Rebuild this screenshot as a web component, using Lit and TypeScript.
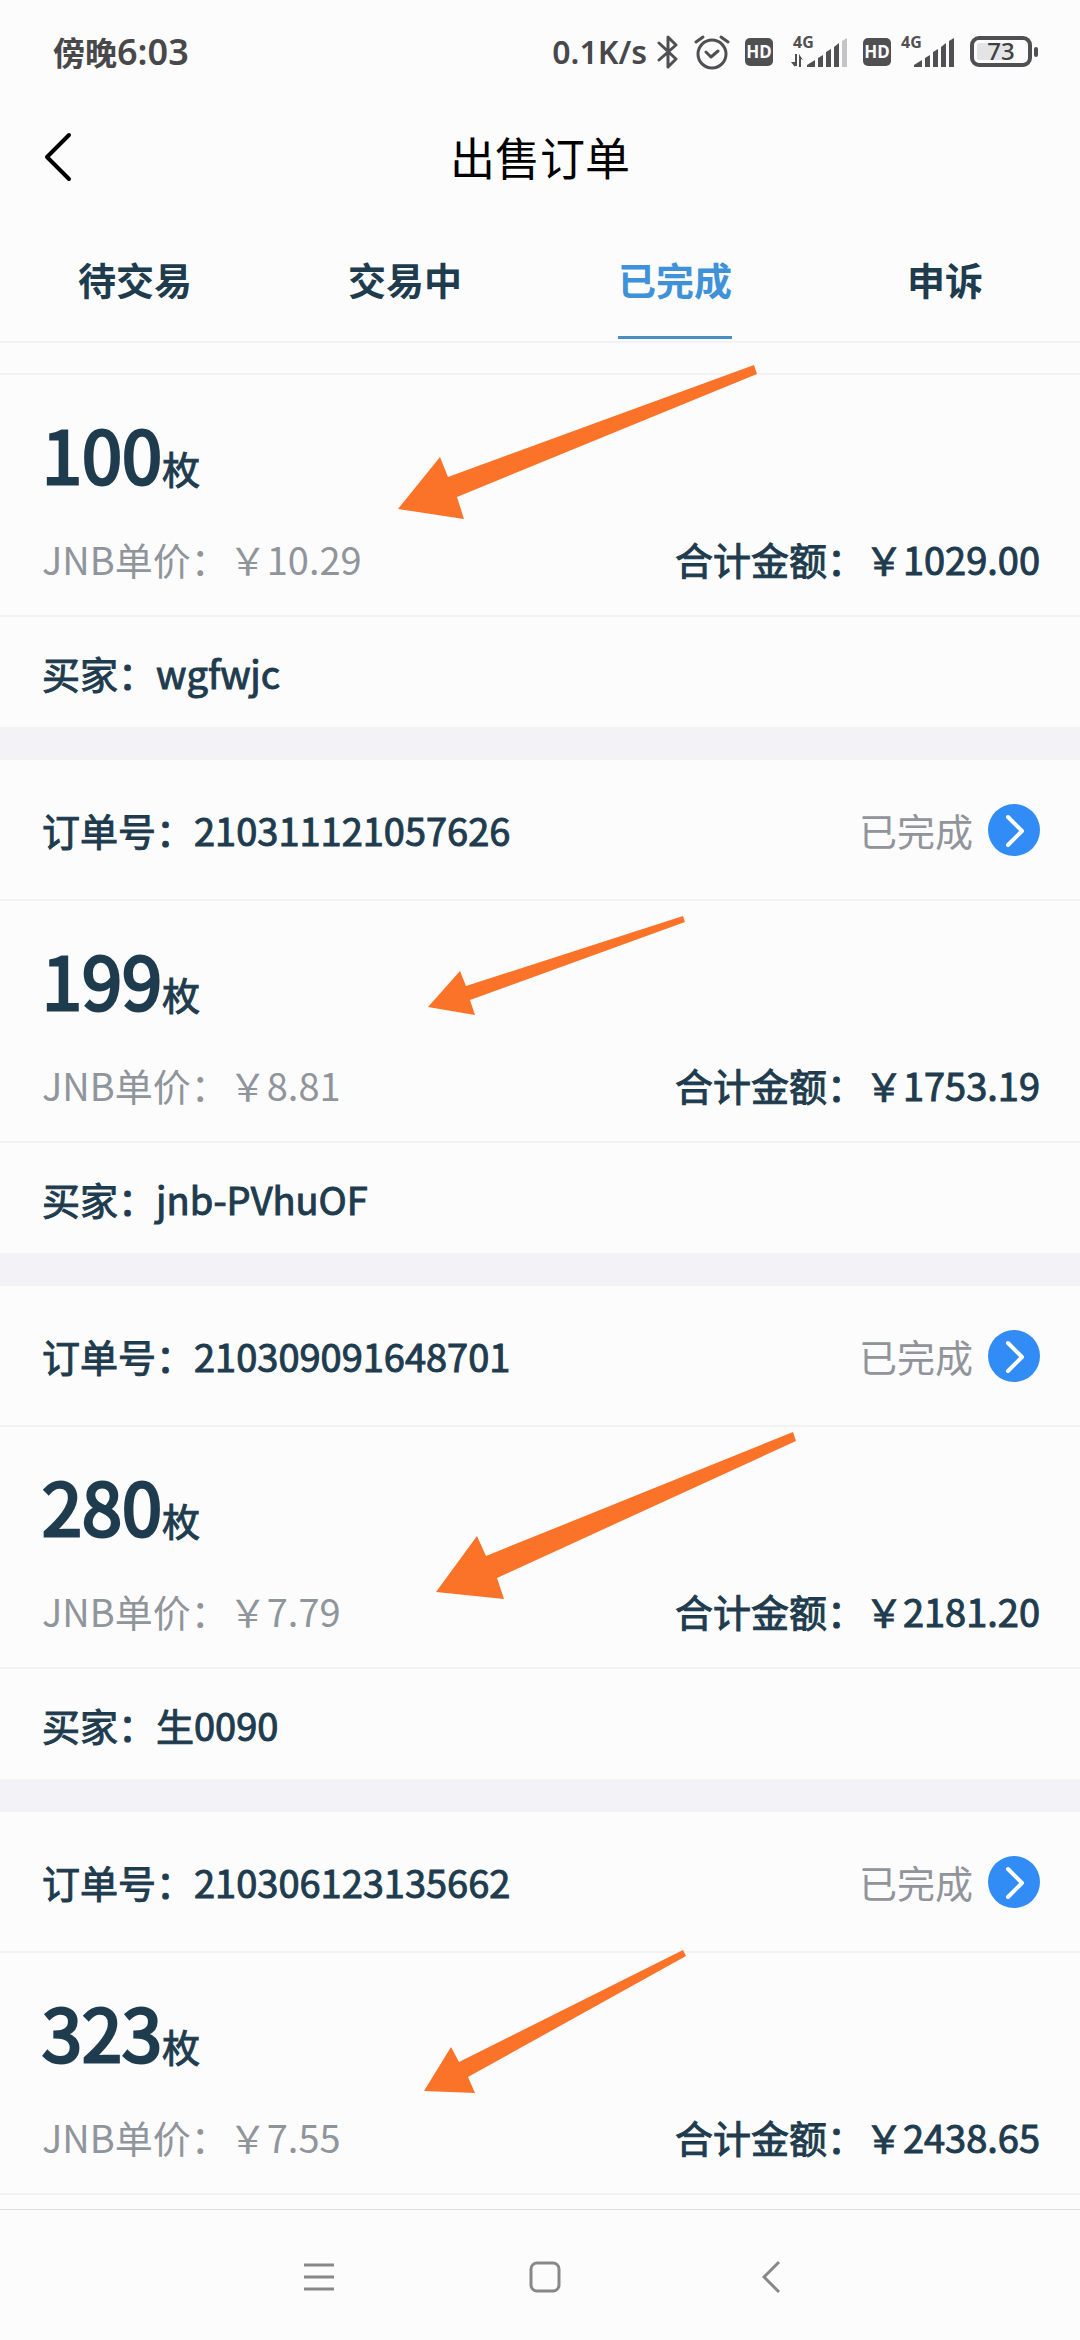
import { LitElement, html, css, svg, nothing } from "lit";
import { customElement, property, state } from "lit/decorators.js";
import { classMap } from "lit/directives/class-map.js";

interface Order {
  id?: string;
  amount: string;
  price: string;
  total: string;
  buyer?: string;
}

const ORDERS: Order[] = [
  { amount: "100", price: "10.29", total: "1029.00", buyer: "wgfwjc" },
  { id: "210311121057626", amount: "199", price: "8.81", total: "1753.19", buyer: "jnb-PVhuOF" },
  { id: "210309091648701", amount: "280", price: "7.79", total: "2181.20", buyer: "生0090" },
  { id: "210306123135662", amount: "323", price: "7.55", total: "2438.65" },
];

const TABS = ["待交易", "交易中", "已完成", "申诉"];

/* Orange marker arrows, drawn over the list; origin is the list's top left. */
const ARROWS = [
  "398,166 440,114 448,134 754,22 757,31 457,154 464,176",
  "428,664 460,628 466,643 683,573 685,579 470,657 475,672",
  "436,1249 477,1193 486,1213 793,1089 796,1098 497,1235 504,1256",
  "424,1748 451,1704 459,1719 683,1607 686,1613 468,1734 475,1750",
];

@customElement("status-bar")
class StatusBar extends LitElement {
  static styles = css`
    :host {
      display: flex;
      align-items: center;
      justify-content: space-between;
      height: 104px;
      padding: 0 42px 0 53px;
      color: #48484a;
      font-family: "Noto Sans", "Noto Sans CJK SC", sans-serif;
      font-size: 32px;
      font-weight: 600;
      line-height: 40px;
    }
    .time {
      font-size: 36px;
    }
    .group {
      display: flex;
      align-items: center;
      gap: 10px;
    }
    svg {
      display: block;
      fill: #505052;
    }
    .line {
      fill: none;
      stroke: #505052;
      stroke-width: 3;
      stroke-linecap: round;
      stroke-linejoin: round;
    }
    .frame {
      stroke-width: 4;
    }
    .hd {
      fill: #fcfcfc;
      font-size: 17px;
      font-weight: 700;
    }
    .net {
      font-size: 16px;
      font-weight: 700;
    }
    .level {
      font-size: 24px;
      font-weight: 500;
      fill: #404042;
    }
    .weak {
      fill: #c4c4c6;
    }
    .charge {
      fill: #e4e4e6;
    }
  `;

  private hd() {
    return html`<svg width="33" height="44" viewBox="0 -4 33 44">
      <rect x="5" y="4" width="28" height="28" rx="5" />
      <text class="hd" x="19" y="24" text-anchor="middle">HD</text>
    </svg>`;
  }

  private bars(x: number, weak: boolean) {
    return svg`
      <path d="M${x} 33V31L${x + 8} 26V33Z" />
      <path d="M${x + 11} 33V24L${x + 16} 21V33Z" />
      <path d="M${x + 19} 33V18L${x + 24} 15V33Z" />
      <path d="M${x + 27} 33V13L${x + 32} 9V33Z" />
      <path class=${weak ? "weak" : ""} d="M${x + 35} 33V7L${x + 40} 4V33Z" />`;
  }

  render() {
    return html`
      <span>傍晚<span class="time">6:03</span></span>
      <div class="group">
        <span>0.1K/s</span>
        <svg width="27" height="44" viewBox="0 -4 27 44">
          <path class="line" d="M2 9L19 25L11 33V3L19 11L2 26" />
        </svg>
        <svg width="36" height="44" viewBox="0 -4 36 44">
          <circle class="line" cx="18" cy="20" r="14" />
          <path class="line" d="M12 18L17 23L24 17M2 8L9 3M34 8L27 3" />
        </svg>
        ${this.hd()}
        <svg width="65" height="44" viewBox="0 -4 65 44">
          <text class="net" x="10" y="14">4G</text>
          <path d="M12 20V32H14V20ZM8 28L12 33V28ZM16 20V33H18V25L20 26L16 20Z" />
          ${this.bars(24, true)}
        </svg>
        ${this.hd()}
        <svg width="59" height="44" viewBox="0 -4 59 44">
          <text class="net" x="0" y="14">4G</text>
          ${this.bars(13, false)}
        </svg>
        <svg width="68" height="44" viewBox="0 -4 68 44">
          <rect class="line frame" x="2" y="4" width="58" height="27" rx="7" />
          <rect class="charge" x="7" y="9" width="34" height="17" rx="2" />
          <rect x="64" y="13" width="4" height="10" rx="2" />
          <text class="level" x="31" y="26" text-anchor="middle">73</text>
        </svg>
      </div>
    `;
  }
}

@customElement("order-card")
class OrderCard extends LitElement {
  @property({ attribute: false }) order!: Order;

  static styles = css`
    :host {
      display: block;
      border-bottom: 33px solid #f2f2f7;
    }
    :host(:last-of-type) {
      border-bottom: 0;
    }
    .head,
    .summary,
    .buyer {
      display: flex;
      align-items: center;
      justify-content: space-between;
      box-sizing: border-box;
      padding: 0 40px 0 42px;
    }
    .head {
      min-height: 141px;
      border-bottom: 2px solid #f2f2f4;
    }
    .head.empty {
      min-height: 32px;
    }
    .strong {
      -webkit-text-stroke: 1px currentColor;
    }
    .state {
      display: flex;
      align-items: center;
      gap: 15px;
      color: #91959b;
    }
    .open {
      display: block;
      padding: 0;
      border: 0;
      background: none;
    }
    svg {
      display: block;
    }
    .summary {
      flex-direction: column;
      align-items: stretch;
      justify-content: flex-start;
      gap: 15px;
      height: 242px;
      padding-top: 30px;
      border-bottom: 2px solid #f2f2f4;
    }
    .amount {
      line-height: 96px;
    }
    .number {
      font-size: 72px;
      -webkit-text-stroke: 3px currentColor;
    }
    .prices {
      display: flex;
      justify-content: space-between;
      line-height: 56px;
    }
    .unit {
      color: #8f959b;
    }
    .buyer {
      min-height: 110px;
    }
  `;

  render() {
    const o = this.order;
    return html`
      <div class=${classMap({ head: true, empty: !o.id })}>
        ${o.id
          ? html`<span class="strong">订单号：${o.id}</span>
              <span class="state">
                已完成
                <button class="open" aria-label="查看订单">
                  <svg width="52" height="52" viewBox="0 0 52 52">
                    <circle cx="26" cy="26" r="26" fill="#318cf5" />
                    <path
                      d="M20 13L34 27L20 41"
                      fill="none"
                      stroke="#fff"
                      stroke-width="4"
                      stroke-linecap="round"
                      stroke-linejoin="round"
                    />
                  </svg>
                </button>
              </span>`
          : nothing}
      </div>
      <div class="summary">
        <div class="amount strong"><span class="number">${o.amount}</span>枚</div>
        <div class="prices">
          <span class="unit">JNB单价：￥${o.price}</span>
          <span class="strong">合计金额：￥${o.total}</span>
        </div>
      </div>
      ${o.buyer
        ? html`<div class="buyer"><span class="strong">买家：${o.buyer}</span></div>`
        : nothing}
    `;
  }
}

@customElement("app-root")
class AppRoot extends LitElement {
  @state() private active = 2;

  static styles = css`
    :host {
      display: flex;
      flex-direction: column;
      min-height: 100vh;
      background: #fcfcfd;
      color: #1f3c4f;
      font-family: "Noto Sans CJK SC", sans-serif;
      font-size: 38px;
      font-weight: 400;
    }
    button {
      margin: 0;
      padding: 0;
      border: 0;
      background: none;
      color: inherit;
      font: inherit;
    }
    svg {
      display: block;
    }
    .title {
      display: grid;
      grid-template-columns: 1fr auto 1fr;
      align-items: center;
      height: 106px;
      padding: 0 42px;
      color: #000;
    }
    .title h1 {
      margin: 0;
      font-size: 45px;
      font-weight: 400;
      line-height: 64px;
    }
    .back {
      justify-self: start;
    }
    .tabs {
      display: grid;
      grid-template-columns: repeat(4, 1fr);
      justify-items: center;
      height: 131px;
      border-bottom: 2px solid #f3f3f5;
    }
    .tab {
      box-sizing: border-box;
      height: 129px;
      padding-top: 10px;
      border-bottom: 3px solid transparent;
      font-weight: 600;
    }
    .tab.active {
      color: #3f92d8;
      border-color: #4a8fc4;
    }
    .list {
      position: relative;
      flex: 1;
    }
    .marks {
      position: absolute;
      left: 0;
      top: 0;
      pointer-events: none;
      fill: #fb7328;
    }
    .nav {
      display: flex;
      justify-content: center;
      box-sizing: border-box;
      height: 131px;
      padding: 50px 0 0 10px;
      border-top: 1px solid #dedee0;
    }
    .nav button {
      display: flex;
      justify-content: center;
      width: 226px;
      height: 34px;
    }
    .nav svg {
      fill: none;
      stroke: #88888a;
      stroke-width: 3;
    }
  `;

  render() {
    return html`
      <status-bar></status-bar>
      <header class="title">
        <button class="back" aria-label="返回">
          <svg width="32" height="50" viewBox="0 0 32 50">
            <path
              d="M27 3L5 25L27 47"
              fill="none"
              stroke="#000"
              stroke-width="4"
              stroke-linecap="round"
              stroke-linejoin="round"
            />
          </svg>
        </button>
        <h1>出售订单</h1>
      </header>
      <nav class="tabs">
        ${TABS.map(
          (label, i) => html`<button
            class=${classMap({ tab: true, active: i === this.active })}
            @click=${() => (this.active = i)}
          >
            ${label}
          </button>`
        )}
      </nav>
      <main class="list">
        ${ORDERS.map((order) => html`<order-card .order=${order}></order-card>`)}
        <svg class="marks" width="1080" height="1860" viewBox="0 0 1080 1860">
          ${ARROWS.map((points) => svg`<polygon points=${points} />`)}
        </svg>
      </main>
      <footer class="nav">
        <button aria-label="最近任务">
          <svg width="34" height="34" viewBox="0 0 34 34">
            <path d="M2 5H32M2 17H32M2 29H32" />
          </svg>
        </button>
        <button aria-label="主屏幕">
          <svg width="34" height="34" viewBox="0 0 34 34">
            <rect x="3" y="3" width="28" height="28" rx="6" />
          </svg>
        </button>
        <button aria-label="返回上一页">
          <svg width="34" height="34" viewBox="0 0 34 34">
            <path d="M25 2L10 17L25 32" />
          </svg>
        </button>
      </footer>
    `;
  }
}
